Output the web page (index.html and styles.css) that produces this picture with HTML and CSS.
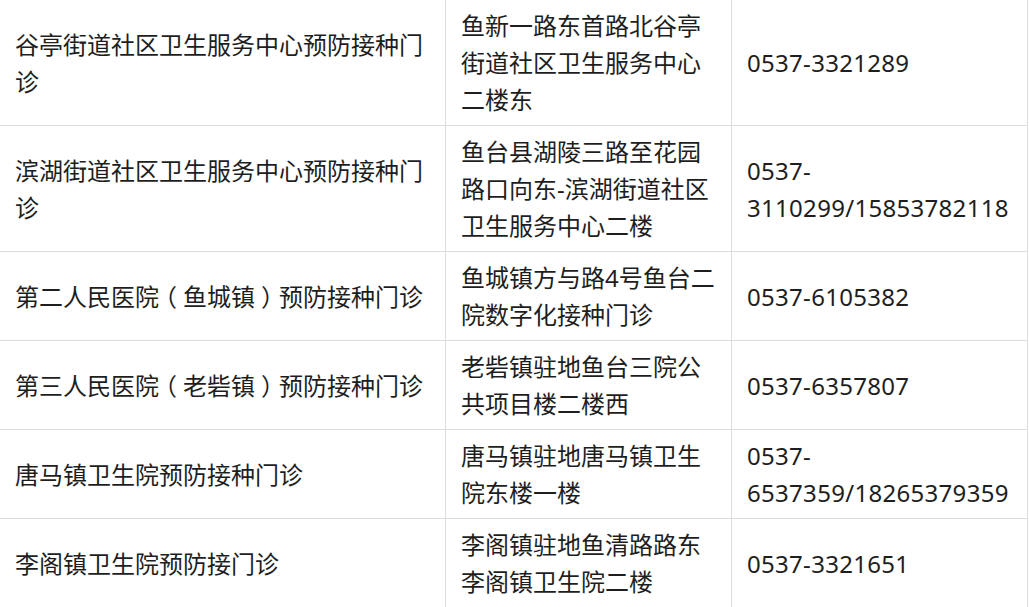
FILE: index.html
```html
<!DOCTYPE html>
<html lang="zh-CN">
<head>
<meta charset="utf-8">
<title>预防接种门诊</title>
<link rel="stylesheet" href="styles.css">
</head>
<body>
<table class="clinics">
  <colgroup>
    <col class="c-name">
    <col class="c-addr">
    <col class="c-tel">
  </colgroup>
  <tbody>
    <tr>
      <td>谷亭街道社区卫生服务中心预防接种门诊</td>
      <td>鱼新一路东首路北谷亭街道社区卫生服务中心二楼东</td>
      <td class="tel">0537-3321289</td>
    </tr>
    <tr>
      <td>滨湖街道社区卫生服务中心预防接种门诊</td>
      <td>鱼台县湖陵三路至花园路口向东-滨湖街道社区卫生服务中心二楼</td>
      <td class="tel">0537-3110299/15853782118</td>
    </tr>
    <tr>
      <td>第二人民医院<span class="paren">（</span>鱼城镇<span class="paren">）</span>预防接种门诊</td>
      <td>鱼城镇方与路4号鱼台二院数字化接种门诊</td>
      <td class="tel">0537-6105382</td>
    </tr>
    <tr>
      <td>第三人民医院<span class="paren">（</span>老砦镇<span class="paren">）</span>预防接种门诊</td>
      <td>老砦镇驻地鱼台三院公共项目楼二楼西</td>
      <td class="tel">0537-6357807</td>
    </tr>
    <tr>
      <td>唐马镇卫生院预防接种门诊</td>
      <td>唐马镇驻地唐马镇卫生院东楼一楼</td>
      <td class="tel">0537-6537359/18265379359</td>
    </tr>
    <tr>
      <td>李阁镇卫生院预防接门诊</td>
      <td>李阁镇驻地鱼清路路东李阁镇卫生院二楼</td>
      <td class="tel">0537-3321651</td>
    </tr>
  </tbody>
</table>
</body>
</html>
```

FILE: styles.css
```css
html, body {
  margin: 0;
  padding: 0;
  background: #ffffff;
}

body {
  font-family: "Noto Sans", "Noto Sans CJK SC", sans-serif;
  font-size: 24px;
  line-height: 37px;
  color: #1e1e1e;
  overflow: hidden;
}

.clinics {
  border-collapse: collapse;
  table-layout: fixed;
  width: 1028px;
  margin: -1px 0 0 -1px;
}

.c-name { width: 446px; }
.c-addr { width: 286px; }
.c-tel  { width: 296px; }

.clinics td {
  border: 1px solid #dcdcdc;
  padding: 7px 10px 7px 15px;
  vertical-align: middle;
  word-break: normal;
  overflow-wrap: normal;
}

.clinics td.tel {
  padding-right: 6px;
  letter-spacing: 0.3px;
}

.paren {
  display: inline-block;
  width: 1em;
  text-align: center;
  font-feature-settings: "halt" 1;
}
```
